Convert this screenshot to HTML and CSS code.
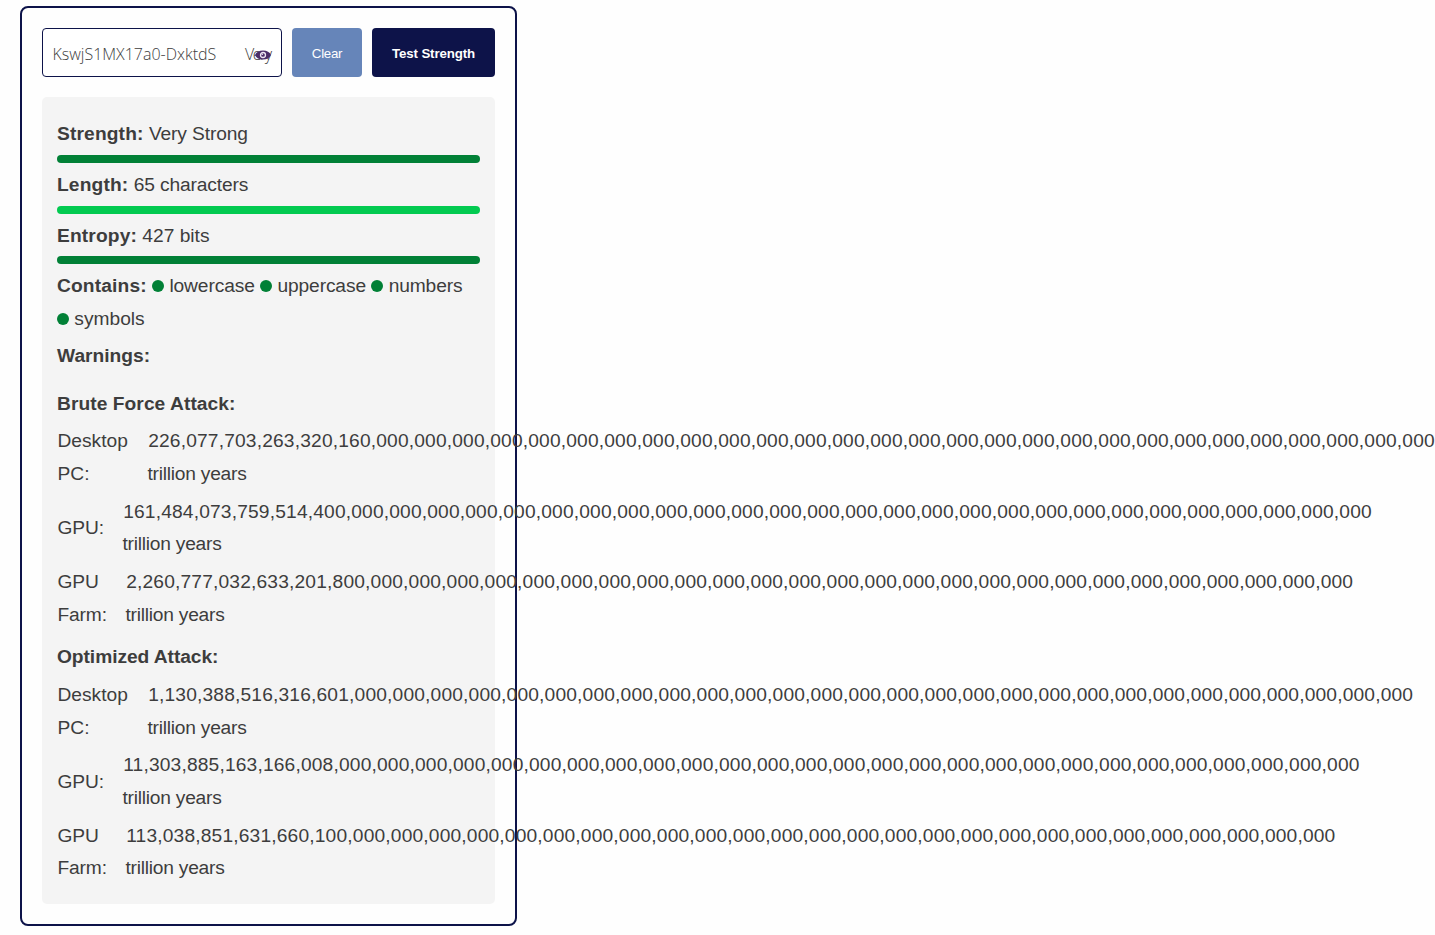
FILE: index.html
```html
<!DOCTYPE html>
<html lang="en">
<head>
<meta charset="utf-8">
<title>Password Strength Test</title>
<link rel="stylesheet" href="styles.css">
</head>
<body>
<main class="card">
  <div class="controls">
    <div class="field"><div class="field-text"><span class="secret">KswjS1MX17a0-DxktdS</span><span class="tail">Very</span></div>
      <svg class="eye" viewBox="0 0 16 10" width="16" height="10"><path d="M0 5Q2 .5 8 .5T16 5Q14 9.500 8 9.500T0 5z" fill="#4b2e68"/><circle cx="8" cy="5" r="2.500" fill="none" stroke="#eee6f3" stroke-width="1.300"/><circle cx="7.300" cy="4.300" r=".8" fill="#eee6f3"/></svg>
    </div>
    <button class="btn clear">Clear</button>
    <button class="btn test">Test Strength</button>
  </div>
  <section class="results">
    <p class="line"><b class="wide">Strength:</b> <span class="tight">Very Strong</span></p>
    <div class="bar"></div>
    <p class="line"><b class="wide">Length:</b> <span class="tight">65 characters</span></p>
    <div class="bar bright"></div>
    <p class="line entropy"><b class="wide">Entropy:</b> <span>427 bits</span></p>
    <div class="bar"></div>
    <p class="line"><b class="wide">Contains:</b> <i class="dot"></i> <span class="tight">lowercase</span> <i class="dot"></i> <span class="tight">uppercase</span> <i class="dot"></i> <span class="tight">numbers</span><br><i class="dot"></i> <span>symbols</span></p>
    <p class="line"><b>Warnings:</b></p>
    <h3 class="heading brute">Brute Force Attack:</h3>
    <div class="row desktop"><span class="label">Desktop<br>PC:</span><span class="value"><span class="num">226,077,703,263,320,160,000,000,000,000,000,000,000,000,000,000,000,000,000,000,000,000,000,000,000,000,000,000,000,000,000,000,000,000</span><br>trillion years</span></div>
    <div class="row gpu"><span class="label">GPU:</span><span class="value"><span class="num">161,484,073,759,514,400,000,000,000,000,000,000,000,000,000,000,000,000,000,000,000,000,000,000,000,000,000,000,000,000,000,000,000</span><br>trillion years</span></div>
    <div class="row farm"><span class="label">GPU<br>Farm:</span><span class="value"><span class="num">2,260,777,032,633,201,800,000,000,000,000,000,000,000,000,000,000,000,000,000,000,000,000,000,000,000,000,000,000,000,000,000,000</span><br>trillion years</span></div>
    <h3 class="heading optimized">Optimized Attack:</h3>
    <div class="row desktop"><span class="label">Desktop<br>PC:</span><span class="value"><span class="num">1,130,388,516,316,601,000,000,000,000,000,000,000,000,000,000,000,000,000,000,000,000,000,000,000,000,000,000,000,000,000,000,000,000</span><br>trillion years</span></div>
    <div class="row gpu"><span class="label">GPU:</span><span class="value"><span class="num">11,303,885,163,166,008,000,000,000,000,000,000,000,000,000,000,000,000,000,000,000,000,000,000,000,000,000,000,000,000,000,000,000</span><br>trillion years</span></div>
    <div class="row farm"><span class="label">GPU<br>Farm:</span><span class="value"><span class="num">113,038,851,631,660,100,000,000,000,000,000,000,000,000,000,000,000,000,000,000,000,000,000,000,000,000,000,000,000,000,000,000</span><br>trillion years</span></div>
  </section>
</main>
</body>
</html>
```
FILE: styles.css
```css
* { box-sizing: border-box; }
html { overflow: hidden; }
body {
  margin: 0;
  padding: 6px 20px 0;
  background: #fefefe;
  color: #3d3d3d;
  font: 19.2px/32.64px "Liberation Sans", Arial, sans-serif;
}
.card {
  width: 497px;
  height: 920px;
  padding: 20px;
  border: 2px solid #0d1349;
  border-radius: 8px;
}
.controls { display: flex; gap: 10px; height: 49px; margin-bottom: 20px; }
.field {
  position: relative;
  width: 240px;
  padding: 0 9.5px;
  border: 1px solid #0d1349;
  border-radius: 4px;
  background: #fff;
}
.field-text {
  display: flex;
  font: 300 16px/50px "Open Sans", "Noto Sans", sans-serif;
  white-space: nowrap;
}
.secret { flex: 0 0 192.5px; }
.tail { letter-spacing: -1.5px; }
.eye { position: absolute; top: 21px; right: 10px; }
.btn {
  padding: 2px 0 0;
  border: 0;
  border-radius: 4px;
  color: #fff;
  font: 13.3px "Liberation Sans", Arial, sans-serif;
}
.btn.clear { width: 70px; background: #6685b9; letter-spacing: -0.3px; }
.btn.test { width: 123px; background: #0d1349; font-weight: bold; letter-spacing: -0.13px; }
.results {
  height: 807px;
  padding: 21px 15px;
  border-radius: 5px;
  background: #f4f4f4;
}
.line { margin: 0 0 4.5px; white-space: nowrap; }
.entropy { padding-top: 0.5px; margin-bottom: 4px; }
.wide { letter-spacing: 0.14px; }
.tight { letter-spacing: -0.12px; }
.bar { height: 8px; margin-bottom: 5.5px; border-radius: 4px; background: #018036; }
.bar.bright { background: #02ca50; }
.dot {
  display: inline-block;
  width: 12px;
  height: 12px;
  border-radius: 50%;
  background: #018036;
}
.heading { margin: 15.5px 0 5px; font-size: inherit; font-weight: bold; }
.brute { letter-spacing: 0.06px; }
.heading.optimized { margin-top: 10px; letter-spacing: -0.06px; }
.row { display: flex; align-items: center; margin-bottom: 5px; white-space: nowrap; }
.label { flex: 0 0 auto; padding-left: 0.5px; }
.desktop .label { width: 90.5px; }
.gpu .label { width: 65.5px; letter-spacing: -0.15px; }
.farm .label { width: 68.5px; letter-spacing: -0.15px; }
.value { letter-spacing: -0.24px; }
.num { margin-left: 0.7px; letter-spacing: 0.165px; }
```
